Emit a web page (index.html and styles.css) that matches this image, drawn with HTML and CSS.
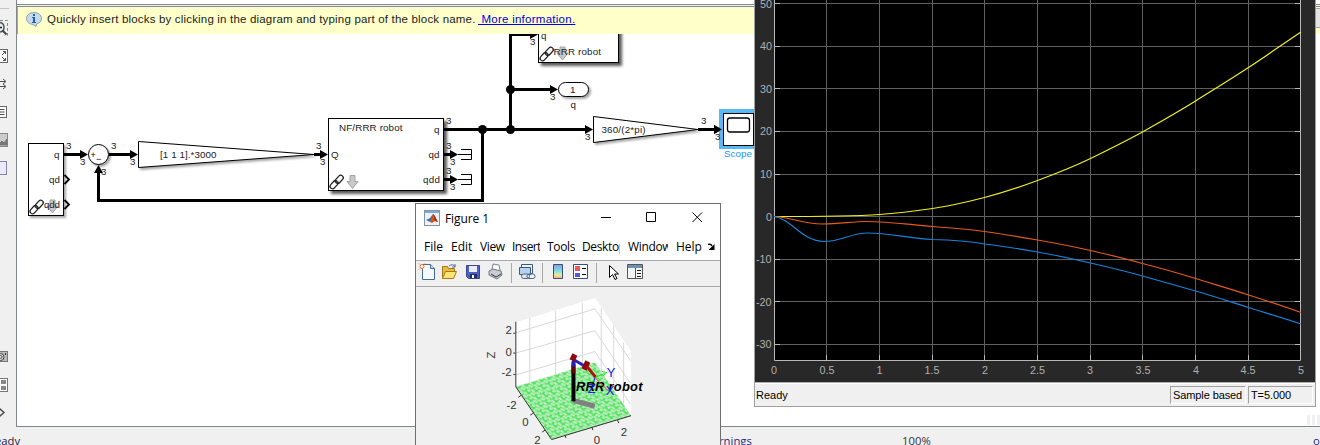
FILE: index.html
```
<!DOCTYPE html>
<html lang="en">
<head>
<meta charset="utf-8">
<title>Robot model</title>
<link rel="stylesheet" href="styles.css">
</head>
<body>
<main class="editor">
  <aside class="palette">
    <svg width="16" height="427" fill="none" stroke="#4d4d4d">
      <path d="M0 8.500h9" stroke="#c4c4c4"/>
      <path d="M0 20.500h7.500v15h-3" stroke="#888" stroke-dasharray="3 2"/>
      <path d="M-1 22.500C3 22.500 4 25 4 27.500S3 32 -1 32" fill="#e4ecf0" stroke="#555" stroke-width="1.500"/><path d="M-1 27.500h3" stroke="#222" stroke-width="1.500"/><path d="M2.500 30.500l4 4" stroke="#444" stroke-width="2"/>
      <rect x="-8.500" y="49.500" width="16" height="13" fill="#fff" stroke="#666"/><path d="M2 55l3.500-3.500M3 51.500h2.500v2.500M2 57l3.500 3.500M3 60.500h2.500V58"/>
      <path d="M0 81.500h5M0 86.500h5M3 79l3 2.500-3 2.500M3 84l3 2.500-3 2.500"/>
      <rect x="-8.500" y="106.500" width="15" height="11" fill="#fff" stroke="#666"/><path d="M0 109.500h4.500M0 112h4.500M0 114.500h4.500"/>
      <rect x="-8.500" y="133.500" width="16" height="13" fill="#ccc" stroke="#888"/><path d="M-1 144l3-3 2 2 3-4v6H-1z" fill="#777" stroke="#777"/>
      <rect x="-8.500" y="161.500" width="15" height="13" fill="#eaeafa" stroke="#8484a0"/>
      <rect x="-8.500" y="351.500" width="16" height="10" fill="#bbb" stroke="#777"/><circle cx="0.500" cy="357" r="3.500" fill="#ddd" stroke="#444"/><circle cx="0.500" cy="357" r="1.500"/><path d="M5.500 353v2" stroke="#333"/>
      <rect x="-8.500" y="378.500" width="16" height="13" fill="#fff" stroke="#777"/><path d="M1 380h5v4H1zM1 386h5v4H1z" fill="#888" stroke="none"/>
      <path d="M-1 408l5 4.500-5 4.500" stroke-width="1.500"/>
    </svg>
  </aside>
  <section class="sheet">
    <div class="ribbon"></div>
    <header class="hint">
      <svg width="16" height="15" viewBox="0 0 16 15"><path d="M8 .5c4.200 0 7.500 2.600 7.500 6 0 2.700-2 4.800-5 5.500l-.5 2.500L7 12.400C3.200 12.200.5 9.700.5 6.500c0-3.400 3.300-6 7.500-6z" fill="#c3dbed" stroke="#8ba0b0"/><path d="M7 2h2v2H7zM6 5h3v5h1v1H6v-1h1V6H6z" fill="#2360a8"/></svg>
      <span class="hint-text">Quickly insert blocks by clicking in the diagram and typing part of the block name.</span><a class="hint-link">&nbsp;More information.</a>
    </header>
    <svg class="diagram" width="1303" height="392" viewBox="17 34 1303 392">
      <defs>
        <filter id="shadow" x="-20%" y="-20%" width="150%" height="150%"><feDropShadow dx="3" dy="3" stdDeviation="1.800" flood-color="#000" flood-opacity=".65"/></filter>
        <filter id="soft" x="-20%" y="-20%" width="150%" height="150%"><feDropShadow dx="2" dy="2" stdDeviation="1.200" flood-color="#000" flood-opacity=".35"/></filter>
        <g id="head"><path d="M-8-4.500L0 0-8 4.500z"/></g>
        <g id="chain" fill="none" stroke="#222" stroke-width="1.300"><rect x="-4.600" y="-2.500" width="9.200" height="5" rx="2.500" transform="translate(5 9.700) rotate(-48)"/><rect x="-4.600" y="-2.500" width="9.200" height="5" rx="2.500" transform="translate(10.300 4.300) rotate(-48)"/></g>
        <path id="down" d="M3 0h5v6h3L5.500 13 0 6h3z" fill="#c8c8c8" stroke="#a4a4a4"/>
        <g id="stop" fill="none" stroke="#000"><path d="M0 .5h13M3 -4.500h10.500v10H3"/></g>
      </defs>
      <g class="wire">
        <path d="M64 154.500h18M109 154.500h22M314 154.500h8M444 129.500h142M482.500 129.500v71H98.500V172M510.500 129.500V34M509 34.500h21M510.500 89.500h41M698 129.500h17M444 154.500h7M444 179.500h7"/>
      </g>
      <use href="#head" x="88" y="154.500"/><use href="#head" x="138" y="154.500"/><use href="#head" x="328" y="154.500"/>
      <use href="#head" x="593" y="129.500"/><use href="#head" x="558" y="89.500"/><use href="#head" x="538" y="34.500"/><use href="#head" x="722" y="129.500"/>
      <use href="#head" x="458" y="154.500"/><use href="#head" x="458" y="179.500"/><path d="M94 173l4.500-8 4.500 8z"/>
      <circle cx="482.500" cy="129.500" r="4.500"/><circle cx="510.500" cy="129.500" r="4.500"/><circle cx="510.500" cy="89.500" r="4.500"/>
      <g class="block">
        <rect x="28.500" y="143.500" width="35" height="72" filter="url(#soft)"/>
        <circle cx="98.500" cy="154.500" r="10" filter="url(#soft)"/>
        <path d="M138.500 141.500v26L314 154.500z" filter="url(#soft)"/>
        <rect x="328.500" y="118.500" width="115" height="72" filter="url(#shadow)"/>
        <path d="M593.500 116.500v26L698 129.500z" filter="url(#soft)"/>
        <rect x="558.500" y="82.500" width="30" height="14" rx="7" filter="url(#soft)"/>
        <rect x="538.500" y="20" width="80" height="42.500" filter="url(#shadow)"/>
      </g>
      <path d="M64.500 175l4.500 4.500-4.500 4.500M64.500 200l4.500 4.500-4.500 4.500" fill="none" stroke="#000" stroke-width="1.800"/>
      <use href="#down" x="47" y="200"/><use href="#chain" x="29" y="200"/>
      <use href="#chain" x="329" y="175"/><use href="#down" x="347" y="175.500"/>
      <use href="#down" x="557" y="47"/><use href="#chain" x="539" y="47"/>
      <use href="#stop" x="458" y="154"/><use href="#stop" x="458" y="179"/>
      <rect x="719" y="109" width="40" height="40" fill="#58b8f8"/><path d="M714 125l8 4.500-8 4.500z"/><rect x="723.500" y="113.500" width="30" height="32" fill="#fff" stroke="#000"/><rect x="727.500" y="118" width="22" height="14" rx="2.500" fill="#fff" stroke="#000" stroke-width="1.300"/>
      <g class="label">
        <text x="54" y="158">q</text><text x="49" y="183" textLength="11">qd</text><text x="44" y="208" textLength="16">qdd</text>
        <text x="90.500" y="158" class="sign">+</text><text x="96" y="162" class="sign">−</text>
        <text x="160" y="158" textLength="56.500">[1 1 1].*3000</text>
        <text x="339" y="131" textLength="63.500">NF/RRR robot</text><text x="331" y="158">Q</text><text x="434" y="133">q</text><text x="428.500" y="158" textLength="11">qd</text><text x="423" y="183" textLength="17">qdd</text>
        <text x="601.500" y="133" textLength="44">360/(2*pi)</text><text x="570" y="93">1</text><text x="570.500" y="108">q</text>
        <text x="541" y="38.500">q</text><text x="553.500" y="55" textLength="47.500">RRR robot</text>
        <text x="724" y="157" textLength="28" class="selected">Scope</text>
      </g>
      <g class="dim">
        <text x="66" y="149">3</text><text x="80" y="165">3</text><text x="111" y="149">3</text><text x="130" y="165">3</text><text x="101" y="175">3</text>
        <text x="316" y="149">3</text><text x="320" y="165">3</text><text x="446" y="124">3</text><text x="446" y="149">3</text><text x="450" y="165">3</text><text x="446" y="174">3</text><text x="450" y="190">3</text>
        <text x="530" y="45">3</text><text x="550" y="100">3</text><text x="585" y="140">3</text><text x="701" y="124">3</text><text x="715" y="140">3</text>
      </g>
      <path d="M1307 415h3v10h-3zM1312 415h3v10h-3zM1317 415h3v10h-3z" fill="#f0f0f0"/>
    </svg>
  </section>
  <footer class="status"><span class="status-ready">eady</span><span class="status-warn">rnings</span><span class="status-zoom">100%</span><span class="status-solver">o</span></footer>
</main>

<section class="figure">
  <header class="titlebar">
    <svg width="16" height="16"><rect x=".5" y=".5" width="15" height="15" fill="#edf2f7" stroke="#8494a4"/><path d="M1 1h14v2H1z" fill="#82a9d0"/><path d="M2 10l4-2 3-4-1 7-2 1z" fill="#3478b4"/><path d="M6 12l3-8c2 1 3 5 5 8l-3-1-3 2z" fill="#d95319"/><path d="M9 4c2 1 3 5 5 8l-3-1z" fill="#9b2d16"/></svg>
    <span class="title">Figure 1</span>
    <svg width="110" height="16" fill="none" stroke="#000"><path d="M6 7.500h10M51.500 2.500h9v9h-9zM97.500 2.500l9.500 9.500M107 2.500L97.500 12"/></svg>
  </header>
  <nav class="menu">
    <span class="item item-file">File</span><span class="item item-edit">Edit</span><span class="item item-view">View</span><span class="item item-insert">Insert</span><span class="item item-tools">Tools</span><span class="item item-desktop">Desktop</span><span class="item item-window">Window</span><span class="item item-help">Help</span>
    <svg width="8" height="8"><path d="M0 1.500q3-1 4 1.500" fill="none" stroke="#000" stroke-width="1.300"/><path d="M6.500 1v6h-6z"/></svg>
  </nav>
  <div class="tools">
    <svg width="304" height="26" viewBox="416 260 304 26">
      <path d="M511.500 262v20M542.500 262v20M596.500 262v20" stroke="#a8a8a8"/>
      <path d="M422.500 263.500h8l4 4v11h-12z" fill="#f5faff" stroke="#49699b"/><path d="M430.500 263.500v4h4" fill="#c8d8f0" stroke="#49699b"/><circle cx="422" cy="265.500" r="2" fill="#fff" stroke="#e8742c"/><path d="M419 262.500l1 1m5-1l-1 1m-5 5l1-1" stroke="#e8742c"/>
      <path d="M442.500 277.500v-12h5l1 2h6v3" fill="#e8bb45" stroke="#a67914"/><path d="M442.500 277.500l3-7h11l-3 7z" fill="#ffe477" stroke="#a67914"/><path d="M449 265q4-3 6 1m0-3v3h-3" fill="none" stroke="#456a98"/>
      <path d="M466.500 264.500h13v13h-11l-2-2z" fill="#4961c7" stroke="#3a478f"/><path d="M469 265h8v6h-8z" fill="#e8eeff"/><path d="M470 273h7v4h-7z" fill="#252d56"/><path d="M472 274h2v3h-2z" fill="#fff"/>
      <path d="M492 269l1-6 6 1 1 5" fill="#fff" stroke="#7d8590"/><path d="M489 270l4-2 8 2 1 4-5 4-8-4z" fill="#c8ccd4" stroke="#70757b"/><path d="M491 273l5 3 5-3" stroke="#333" fill="none"/>
      <path d="M521.500 263.500h11v9h-11z" fill="#eaf3fc" stroke="#385a80"/><path d="M519.500 266.500h11v7h-11z" fill="#b8d1ed" stroke="#385a80"/><rect x="521.500" y="273" width="8" height="4.500" rx="2" fill="#dce4ec" stroke="#506888"/><rect x="527" y="273" width="8" height="4.500" rx="2" fill="none" stroke="#506888"/>
      <defs><linearGradient id="bar" x2="0" y2="1"><stop stop-color="#8a98e8"/><stop offset=".5" stop-color="#83e3de"/><stop offset=".75" stop-color="#f5e79c"/><stop offset="1" stop-color="#f4aa70"/></linearGradient></defs>
      <path d="M553.500 263.500h9v14h-9z" fill="url(#bar)" stroke="#35517a"/>
      <path d="M573.500 263.500h14v14h-14z" fill="#f8faff" stroke="#35517a"/><path d="M575 265h5v5h-5z" fill="#e55"/><path d="M575 272h5v4h-5z" fill="#55d"/><path d="M582 267.500h4M582 273.500h4" stroke="#000"/>
      <path d="M609.500 264.500v12l3-3 2.500 5 2-1-2.500-4.500h4z" fill="#fff" stroke="#000"/>
      <path d="M627.500 263.500h15v14h-15z" fill="#f4f4f4" stroke="#555"/><path d="M628 264h14v3h-14z" fill="#6d91b2"/><path d="M635.500 267v10" stroke="#555"/><path d="M637 269.500h4M637 272.500h4M637 275.500h4" stroke="#222"/>
    </svg>
  </div>
  <svg class="axes3d" width="304" height="158" viewBox="416 287 304 158">
    <defs><pattern id="turf" width="8" height="8" patternUnits="userSpaceOnUse" patternTransform="rotate(-17)"><rect width="8" height="8" fill="#50e45c"/><path d="M0 1h3v2h2M5 0h2v2M1 3v2h2v2M4 5h3v1M6 7h2M0 7h1" fill="none" stroke="#f0f0f0" stroke-width="1.200"/></pattern></defs>
    <path d="M515.500 322.500L595.500 298l36 54v64l-36-54-80 25z" fill="#fff"/>
    <path d="M515.500 387.500L595 363l36.500 53.500-80 24z" fill="url(#turf)"/>
    <path d="M529.500 318v65M555.500 311v64M582.500 303v64M515.500 333L595 309l36 52M515.500 353.500L595 331l36 53M515.500 375.500L595 352l36 53M601.500 308v65M614 326v64M624 343v62" fill="none" stroke="#d8d8d8"/>
    <path d="M515.500 322v65.500L551.500 440.500l80-24M513 333.500h2M513 353.500h2M513 375h2M521 396l-3 2M533 414l-3 2M545 431l-3 2M565 436l1 3M592 428l1 3M618 421l1 3" fill="none" stroke="#333"/>
    <path d="M573 401l22 6" stroke="#808080" stroke-width="5"/><path d="M573.500 402v-40" stroke="#000" stroke-width="4"/><path d="M573.500 374v-9" stroke="#600" stroke-width="4"/><path d="M573.500 367v-7l12 7" fill="none" stroke="#2222c0" stroke-width="3"/><path d="M572 361l3-6M584 370l4-8" stroke="#8d0c10" stroke-width="5.500"/><path d="M587 367l9 11" stroke="#b01010" stroke-width="3"/>
    <path d="M595 378l10-4m-3-2l5 1-4 4" fill="none" stroke="#22dd22"/><path d="M595 378l-3 12" stroke="#22f"/>
    <text x="576" y="392" class="robot-name" textLength="67">RRR robot</text>
    <path d="M595 378l13 13" stroke="#f33"/>
    <g class="axis-letter"><text x="607" y="378">Y</text><text x="588" y="394">Z</text><text x="606" y="396">X</text></g>
    <g class="axis-tick"><text x="505" y="334">2</text><text x="505" y="356">0</text><text x="501" y="377">-2</text><text x="506" y="410">-2</text><text x="522" y="427">0</text><text x="534" y="445">2</text><text x="594" y="445">0</text><text x="621" y="437">2</text><text transform="translate(495 359) rotate(-90)">Z</text></g>
  </svg>
</section>

<section class="scope">
  <svg class="plot" width="560" height="382" viewBox="755 0 560 382">
    <rect x="774" y="0" width="527" height="361" fill="#000"/>
    <path class="grid" d="M826.500 0v360M879.500 0v360M932.500 0v360M984.500 0v360M1037.500 0v360M1090.500 0v360M1142.500 0v360M1195.500 0v360M1248.500 0v360M774 3.500h527M774 46.500h527M774 88.500h527M774 131.500h527M774 174.500h527M774 216.500h527M774 259.500h527M774 301.500h527M774 344.500h527"/>
    <path class="frame" d="M774.500 0v360.500h526V0M774 3.500h6M774 46.500h6M774 88.500h6M774 131.500h6M774 174.500h6M774 216.500h6M774 259.500h6M774 301.500h6M774 344.500h6M1295 3.500h6M1295 46.500h6M1295 88.500h6M1295 131.500h6M1295 174.500h6M1295 216.500h6M1295 259.500h6M1295 301.500h6M1295 344.500h6M826.500 355v5M879.500 355v5M932.500 355v5M984.500 355v5M1037.500 355v5M1090.500 355v5M1142.500 355v5M1195.500 355v5M1248.500 355v5"/>
    <path class="trace trace-yellow" d="M774 216.500C821 216.500 850 216.500 879.500 214.500C900 213 915 211 932.500 208.500C950 206 967 202 984.500 197.500C1002 193 1020 187 1037.500 180.500C1055 174 1073 167 1090.500 158.500C1108 150 1125 141.500 1142.500 132C1160 122 1178 112 1195.500 101C1213 90 1231 79 1248.500 67.500C1266 56 1283 44 1301 32"/>
    <path class="trace trace-orange" d="M774 216.500C790 217 803 224 822 224C840 224 852 221.500 866 221.500C889 221.500 908 224.500 932.500 226.500C950 228 967 229 984.500 231.500C1002 234 1020 237 1037.500 240C1055 243 1073 246.500 1090.500 250.500C1108 254.500 1125 258.500 1142.500 263.500C1160 268 1178 273 1195.500 278.500C1213 284 1231 289 1248.500 295C1266 300.500 1283 306 1301 312.500"/>
    <path class="trace trace-blue" d="M774 216.500C792 219 802 241.500 824 241.500C842 241.500 850 233 868 233C888 233 908 238 932.500 239.500C950 240 967 241 984.500 244C1002 246 1020 249 1037.500 252C1055 255 1073 259 1090.500 263C1108 267 1125 271 1142.500 276C1160 281 1178 286 1195.500 291C1213 296 1231 302 1248.500 307.500C1266 313 1283 318 1301 324"/>
    <g class="scale-y"><text x="772" y="8">50</text><text x="772" y="50">40</text><text x="772" y="93">30</text><text x="772" y="135">20</text><text x="772" y="178">10</text><text x="772" y="221">0</text><text x="771.500" y="263">-10</text><text x="771.500" y="306">-20</text><text x="771.500" y="348">-30</text></g>
    <g class="scale-x"><text x="774" y="374">0</text><text x="827" y="374">0.5</text><text x="879.500" y="374">1</text><text x="932" y="374">1.5</text><text x="985" y="374">2</text><text x="1037.500" y="374">2.5</text><text x="1090" y="374">3</text><text x="1143" y="374">3.5</text><text x="1196" y="374">4</text><text x="1248" y="374">4.5</text><text x="1301" y="374">5</text></g>
  </svg>
  <footer class="scope-status"><span class="scope-ready">Ready</span><span class="cell cell-mode">Sample based</span><span class="cell cell-time">T=5.000</span></footer>
</section>
<div class="overflow-button"></div>
</body>
</html>
```

FILE: styles.css
```
* { box-sizing: border-box; }
body { margin: 0; width: 1320px; height: 445px; position: relative; overflow: hidden; background: #f0f0f0; font-family: "Liberation Sans", sans-serif; color: #000; }
svg { display: block; flex: none; }
.editor { width: 1320px; height: 445px; display: grid; grid-template: 427px 18px / 16px 1304px; }
.palette { background: #f0f0f0; }
.sheet { border-left: 1px solid #828790; border-bottom: 1px solid #828790; background: #fff; overflow: hidden; }
.ribbon { height: 7px; border-bottom: 1px solid #828790; background: linear-gradient(#fff 4px, #828790 4px 5px, #f4f4f4 5px); }
.hint { height: 27px; display: flex; align-items: center; background: #ffffca; border-left: 1px solid #a4a49a; padding: 0 0 3px 8px; font-size: 11.500px; letter-spacing: .18px; line-height: 16px; white-space: nowrap; }
.hint-text { margin-left: 5px; width: 431px; color: #222; }
.hint-link { color: #0000e0; text-decoration: underline; letter-spacing: .26px; }
.diagram { background: #fff; }
.wire { fill: none; stroke: #000; stroke-width: 3; }
.block { fill: #fff; stroke: #000; }
.label { font-size: 9.800px; fill: #222; }
.sign { font-size: 9px; fill: #000; }
.selected { fill: #1c94f0; }
.dim { font-size: 9.800px; fill: #222; }
.status { grid-column: 1 / 3; display: flex; background: #f0f0f0; color: #224; font: 11.300px/15px "Open Sans", sans-serif; padding-top: 6px; }
.status-ready { width: 724px; margin-left: -5px; }
.status-warn { width: 183px; color: #2a2a80; }
.status-zoom { width: 411px; color: #333; }
.status-solver { color: #2a2a80; }
.figure { position: absolute; left: 415px; top: 203px; width: 306px; height: 260px; border: 1px solid #6e6e6e; background: #f0f0f0; }
.titlebar { height: 29px; padding: 0 8px 1px; display: flex; align-items: center; background: #fff; font: 12px "Open Sans", sans-serif; }
.title { width: 150px; margin-left: 5px; letter-spacing: -.1px; }
.menu { height: 27px; padding-left: 8px; display: flex; align-items: center; background: #fff; font: 12px "Open Sans", sans-serif; }
.item { overflow: hidden; white-space: nowrap; letter-spacing: -.35px; }
.item-file { width: 27px; letter-spacing: 0; }
.item-edit { width: 29px; letter-spacing: 0; }
.item-view { width: 25px; margin-right: 7px; }
.item-insert { width: 28px; margin-right: 7px; letter-spacing: -.6px; }
.item-tools { width: 28px; margin-right: 7px; }
.item-desktop { width: 38px; margin-right: 8px; }
.item-window { width: 40px; margin-right: 8px; }
.item-help { width: 32px; letter-spacing: 0; }
.tools { height: 27px; border-top: 1px solid #a8a8a8; }
.axes3d { border-top: 1px solid #a8a8a8; margin-top: -1px; }
.robot-name { font: italic bold 13px "Liberation Sans", sans-serif; }
.axis-letter { font-size: 13px; fill: #2020e8; }
.axis-tick { font-size: 11.500px; fill: #333; }
.scope { position: absolute; left: 754px; top: 0; width: 562px; height: 407px; border: solid #a0a0a0; border-width: 0 1px 1px; background: #282828; }
.grid { fill: none; stroke: #606060; }
.frame { fill: none; stroke: #b8b8b8; }
.trace { fill: none; stroke-width: 1.200; }
.trace-yellow { stroke: #f0f01c; }
.trace-orange { stroke: #e65a1d; }
.trace-blue { stroke: #1684da; }
.scale-x, .scale-y { font-size: 10.800px; fill: #b0b0b0; text-anchor: middle; }
.scale-y { text-anchor: end; }
.scope-status { height: 24px; display: flex; gap: 2px; align-items: center; padding: 1px 2px 0 1px; background: #f0f0f0; border-top: 1px solid #b0b0b0; box-shadow: inset 0 1px #fff; font-size: 11px; }
.scope-ready { flex: 1; }
.cell { height: 18px; line-height: 16px; padding-left: 2px; border: 1px solid; border-color: #a0a0a0 #fff #fff #a0a0a0; white-space: nowrap; letter-spacing: -.1px; }
.cell-mode { width: 76px; }
.cell-time { width: 65px; }
.overflow-button { position: absolute; left: 1316px; top: 8px; width: 4px; height: 20px; background: #e4e4e4; border: solid #a4a4a4; border-width: 1px 0; }
```
